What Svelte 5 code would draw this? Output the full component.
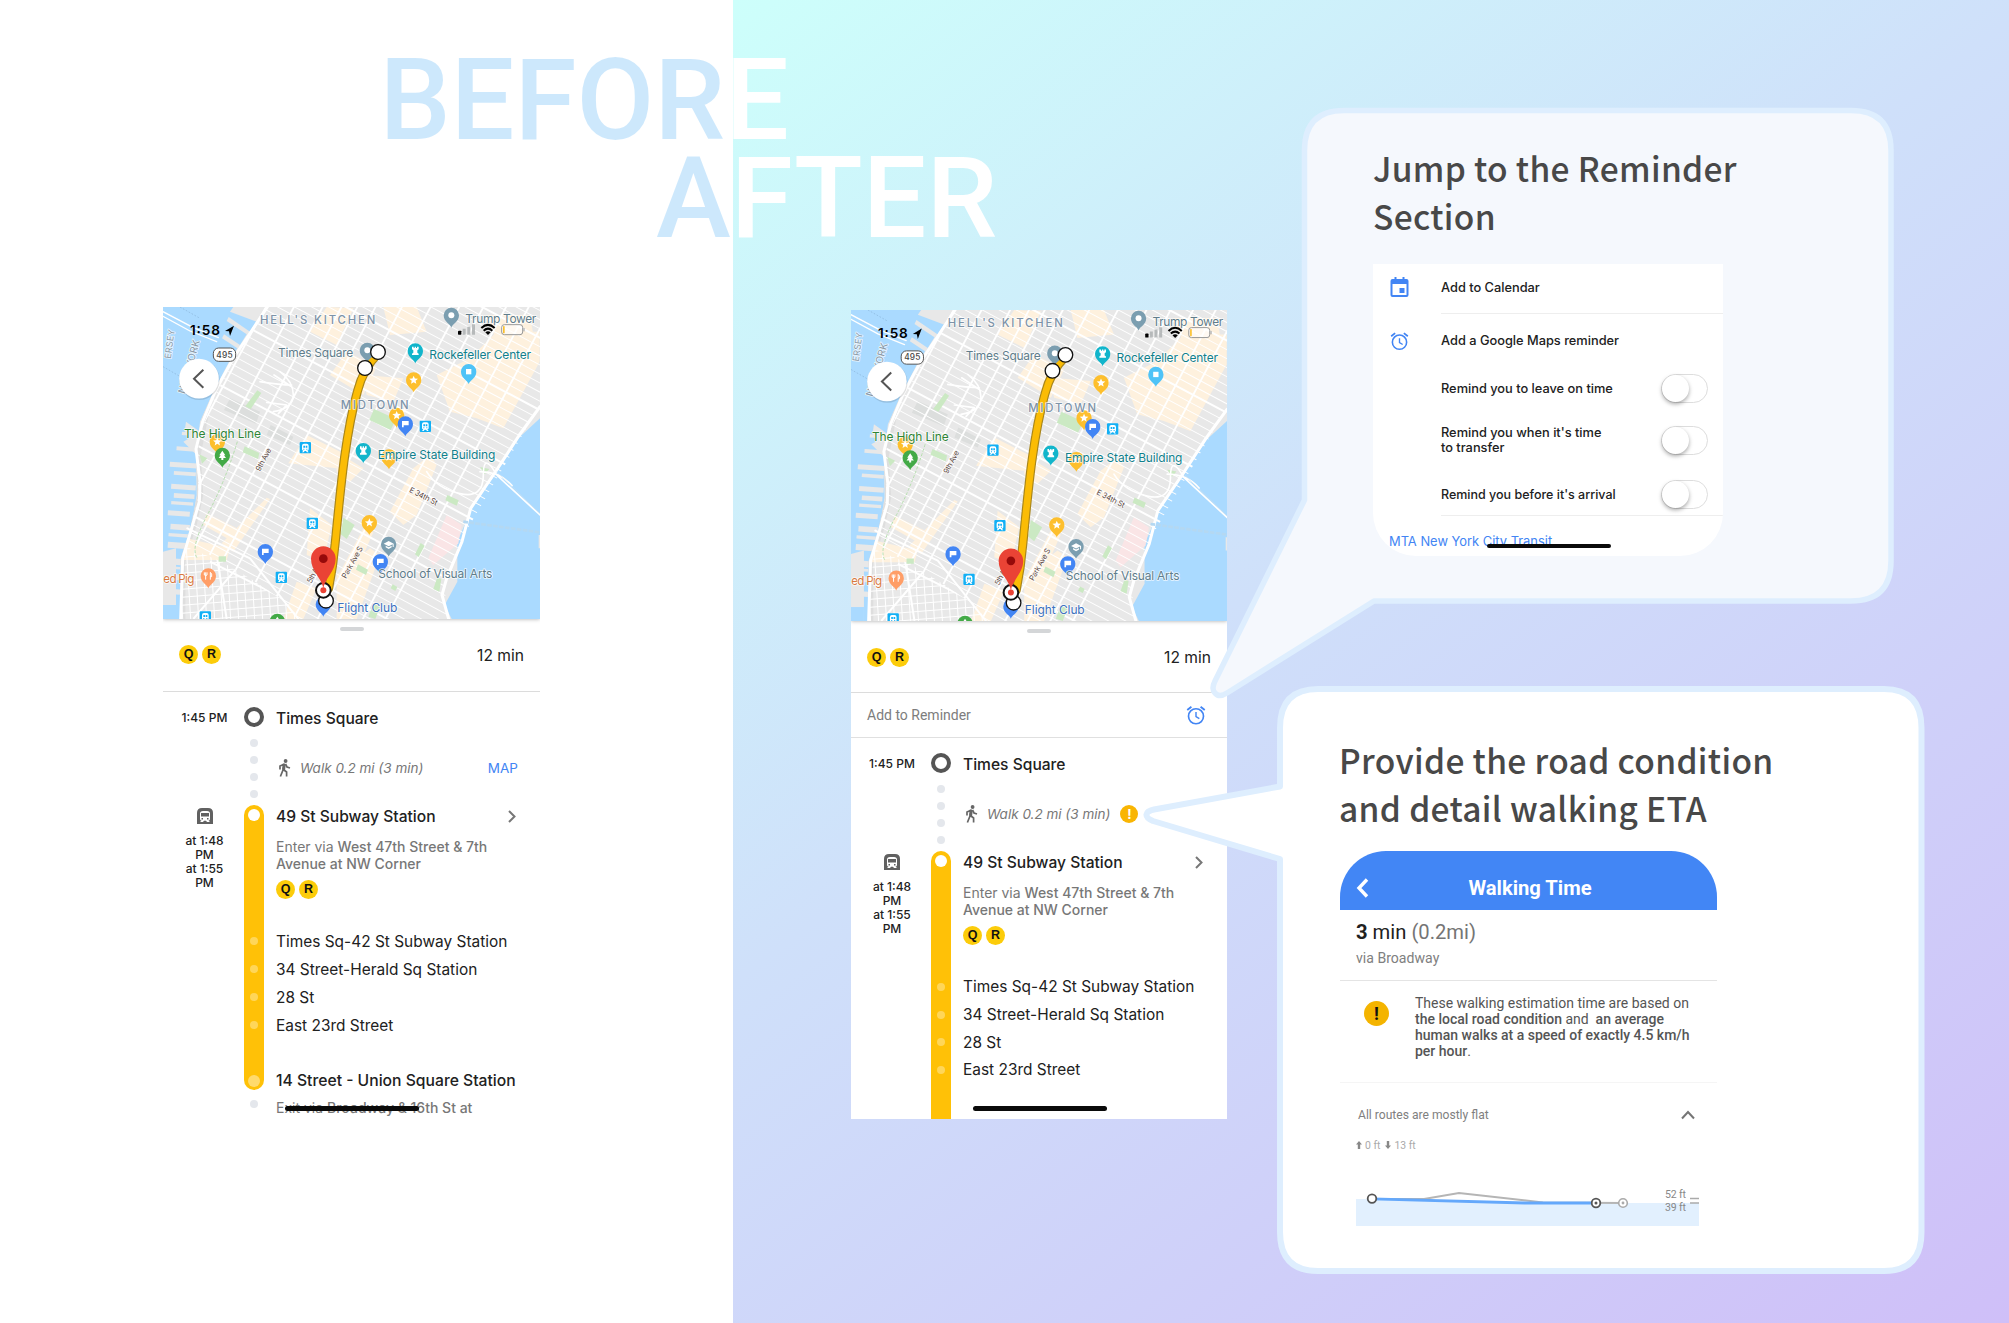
<script>
  const range = (from, to, step) => {
    const out = [];
    for (let v = from; v <= to; v += step) out.push(v);
    return out;
  };
  const streets = range(-700, 900, 24);
  const avenues = [20, 92, 168, 246, 322, 398, 474, 524, 566, 614, 684, 760, 836, 900, 960, 1020, 1080];
  const villageLines = range(60, 420, 24);

  const piers = [
    [60, 500, 82, 15], [72, 528, 66, 11], [64, 566, 74, 15], [72, 594, 62, 14], [54, 646, 66, 15],
    [62, 686, 58, 17], [54, 740, 54, 18], [39, 788, 56, 19], [39, 835, 52, 17], [39, 880, 52, 16],
    [80, 454, 56, 12], [96, 410, 44, 10], [64, 618, 66, 10], [56, 714, 58, 10], [39, 812, 52, 8]
  ];

  const commercial = [
    '480,110 560,150 610,40 530,36', '540,240 640,300 680,215 590,170', '700,36 800,36 830,110 720,120',
    '470,420 590,480 560,520 415,505', '560,470 640,520 600,560 560,530', '640,240 760,250 730,320 650,300',
    '860,240 960,190 1040,110 1169,110 1169,200 1060,400 980,370 900,350', '1010,60 1140,60 1150,120 1040,140',
    '790,520 840,480 860,510 800,660 760,690 720,650', '350,608 360,612 250,770 215,745',
    '170,655 260,700 240,735 160,690', '480,640 545,690 520,800 470,780', '110,730 240,760 230,795 100,795',
    '560,840 660,760 690,780 620,972 560,972', '640,700 670,712 600,870 560,850', '440,860 500,880 460,972 400,972'
  ];

  const parks = [
    '672,342 738,372 722,405 658,375', '322,286 334,294 302,342 286,334', '284,454 328,474 324,492 278,472',
    '580,668 614,690 590,732 572,718', '148,478 172,490 156,506', '892,600 926,616 920,632 886,616',
    '990,516 1018,522 1004,538', '812,744 824,752 806,786 795,778', '206,784 228,784 228,800 206,800',
    '624,808 654,824 648,840 618,824', '862,846 874,852 868,890 850,882', '728,868 742,876 736,888 722,880',
    '670,925 690,935 676,972 655,965'
  ];

  const pins = [
    { x: 904, y: 61, color: '#7b9eb0', glyph: 'dot' },
    { x: 652, y: 166, color: '#7b9eb0', glyph: 'dot' },
    { x: 796, y: 168, color: '#12b5cb', glyph: 'rook' },
    { x: 956, y: 230, color: '#4fc3f7', glyph: 'square' },
    { x: 791, y: 255, color: '#fdbf2d', glyph: 'star' },
    { x: 740, y: 361, color: '#fdbf2d', glyph: 'star' },
    { x: 766, y: 387, color: '#4285f4', glyph: 'flag' },
    { x: 202, y: 440, color: '#fdbf2d', glyph: 'star' },
    { x: 217, y: 481, color: '#43aa47', glyph: 'tree' },
    { x: 640, y: 467, color: '#12b5cb', glyph: 'rook' },
    { x: 717, y: 486, color: '#fdbf2d', glyph: 'star' },
    { x: 658, y: 683, color: '#fdbf2d', glyph: 'star' },
    { x: 716, y: 748, color: '#7b9eb0', glyph: 'cap' },
    { x: 691, y: 800, color: '#4285f4', glyph: 'flag' },
    { x: 346, y: 770, color: '#4285f4', glyph: 'flag' },
    { x: 175, y: 843, color: '#ff9e67', glyph: 'fork' },
    { x: 520, y: 928, color: '#4285f4', glyph: 'none' },
    { x: 382, y: 979, color: '#43aa47', glyph: 'tree' }
  ];
  const stations = [[466, 458], [826, 394], [487, 685], [394, 847], [166, 966]];

  const labels = [
    { x: 330, y: 86, w: 346, t: "HELL'S KITCHEN", c: '#7d93a8', s: 34, b: 500 },
    { x: 572, y: 343, w: 204, t: 'MIDTOWN', c: '#7d93a8', s: 34, b: 500 },
    { x: 946, y: 84, w: 213, t: 'Trump Tower', c: '#607d8b', s: 36, b: 400 },
    { x: 384, y: 187, w: 226, t: 'Times Square', c: '#607d8b', s: 36, b: 400 },
    { x: 838, y: 192, w: 305, t: 'Rockefeller Center', c: '#11808c', s: 36, b: 400 },
    { x: 102, y: 430, w: 231, t: 'The High Line', c: '#2e8436', s: 36, b: 400 },
    { x: 683, y: 492, w: 353, t: 'Empire State Building', c: '#11808c', s: 36, b: 400 },
    { x: 685, y: 848, w: 342, t: 'School of Visual Arts', c: '#607d8b', s: 36, b: 400 },
    { x: 562, y: 951, w: 180, t: 'Flight Club', c: '#3c71c0', s: 36, b: 400 },
    { x: 40, y: 865, w: 93, t: 'ed Pig', c: '#d9793f', s: 35, b: 400 }
  ];
  const roadLabels = [
    { x: 330, y: 530, r: -62, w: 74, t: '9th Ave' },
    { x: 776, y: 590, r: 27, w: 92, t: 'E 34th St' },
    { x: 588, y: 852, r: -61, w: 106, t: 'Park Ave S' },
    { x: 484, y: 866, r: -62, w: 48, t: '5th A' }
  ];

  const stops = ['Times Sq-42 St Subway Station', '34 Street-Herald Sq Station', '28 St', 'East 23rd Street'];
</script>

{#snippet pin(p)}
  <g transform="translate({p.x} {p.y})">
    <path d="M0 37C-3 25-23 20-23 0a23 23 0 0 1 46 0C23 20 3 25 0 37Z" fill={p.color} />
    {#if p.glyph === 'dot'}
      <circle r="9" fill="#fff" />
    {:else if p.glyph === 'square'}
      <rect x="-8" y="-8" width="16" height="16" fill="#fff" />
    {:else if p.glyph === 'star'}
      <polygon points="0,-13 3.6,-4.4 13,-3.8 5.8,2.2 8,11.4 0,6.400 -8,11.4 -5.8,2.2 -13,-3.8 -3.6,-4.4" fill="#fff" />
    {:else if p.glyph === 'flag'}
      <path d="M-10-9H10V4H-5V10H-10Z" fill="#fff" />
    {:else if p.glyph === 'tree'}
      <path d="M0-14 9 0 5 0 11 8H3V14H-3V8H-11L-5 0-9 0Z" fill="#fff" />
    {:else if p.glyph === 'rook'}
      <path d="M-10-13h5v4h3v-4h4v4h3v-4h5v8l-4 3v7l4 3v4h-20v-4l4-3v-7l-4-3Z" fill="#fff" />
    {:else if p.glyph === 'cap'}
      <path d="M-15-2 0-10 15-2V8H12V0L0 6ZM-9 4 0 9 9 4V9L0 14-9 9Z" fill="#fff" />
    {:else if p.glyph === 'fork'}
      <path d="M-8-11v22M-12-11v8q4 4 8 0v-8M6 11V-11q6 4 4 13H6" fill="none" stroke="#fff" stroke-width="3" />
    {/if}
  </g>
{/snippet}

{#snippet map(id)}
  <svg class="map" viewBox="39 36 1131 936" preserveAspectRatio="none">
    <defs>
      <clipPath id="{id}-island">
        <path d="M345 36 300 110 240 195 190 290 150 380 138 480 146 600 124 700 96 780 90 972H890L884 860 930 740 965 640 1040 530 1110 425 1170 330V36Z" />
      </clipPath>
      <clipPath id="{id}-village"><path d="M108 755 215 800 300 850 420 930 445 972H92Z" /></clipPath>
      <clipPath id="{id}-grid"><path d="M345 36 200 290 160 390 140 480 146 600 112 740 215 800 300 850 420 930 445 972H890L884 860 930 740 1170 330V36Z" /></clipPath>
    </defs>
    <rect x="39" y="36" width="1131" height="936" fill="#aadaff" />
    <g fill="#e8e8e8">
      <path d="M252 36 345 36 300 110 236 66 230 78 290 118 270 150 222 118 216 130 262 160 240 195 190 290 150 380 138 480 140 600 124 700 96 780 90 972H905L884 930 922 860V740L965 640 1040 530 1110 425 1170 370V36Z" />
      <path d="M352 36H250L240 50 330 84ZM108 380 150 410 140 480 100 440 118 430 104 408Z" />
      {#each piers as [x, y, w, h]}
        <rect {x} {y} width={w} height={h} transform="rotate(4 {x} {y})" />
      {/each}
      <path d="M39 770 78 760V972H39ZM1166 720H1170V760H1166Z" />
    </g>
    <path d="M39 930H78V972H39Z" fill="#aadaff" />
    <path d="M190 290 155 370 138 480 142 600 118 710 92 790 90 972H106V800L140 690 160 600 152 480 170 390Z" fill="#dedede" />
    <g clip-path="url(#{id}-island)">
      {#each commercial as points}<polygon {points} fill="#fef1de" />{/each}
      <path d="M890 660 935 690 925 745 850 810 835 790Z" fill="#fae5e6" />
      <path d="M240 310 330 350 318 386 222 345ZM362 390 430 425 420 450 350 420Z" fill="#dcdedd" />
    </g>
    <g clip-path="url(#{id}-grid)">
      <g transform="rotate(28)" stroke="#fff" fill="none">
        {#each streets as y, i}<path d="M0 {y}H1400" stroke-width={i % 8 === 3 ? 6 : 2.8} />{/each}
        {#each avenues as x}<path d="M{x} -700V900" stroke-width="5.500" />{/each}
      </g>
    </g>
    <g clip-path="url(#{id}-village)" stroke="#fff" stroke-width="3">
      {#each villageLines as x}
        <path d="M{x} 740 {x + 14} 972" />
        <path d="M80 {x + 560} 460 {x + 530}" />
      {/each}
      <path d="M180 800 460 940M130 972 260 820M230 972 200 780" stroke-width="6" />
    </g>
    <g clip-path="url(#{id}-island)">
      {#each parks as points}<polygon {points} fill="#cbe9c3" />{/each}
    </g>
    <g fill="none" stroke="#fff" stroke-linecap="round" stroke-linejoin="round">
      <path d="M352 36 300 115 252 186 196 288 158 380 138 462 150 560 148 620 122 710 98 790 92 972" stroke-width="9" />
      <path d="M1170 335 1108 420 1040 525 962 640 936 740 890 850 876 900 896 972" stroke-width="9" />
      <path d="M39 50 130 98 205 128M39 64 120 108 200 140" stroke-width="4" />
      <path d="M390 230Q430 260 430 300T370 350M372 240 425 275M350 322 410 330 385 356M330 260Q390 270 425 270" stroke-width="5" />
      <path d="M830 530Q860 580 930 596T1000 540 1040 540L1170 660M990 530Q1050 530 1086 572" stroke-width="5" />
      <path d="M112 700 300 790 445 972" stroke-width="6" />
    </g>
    <path d="M1040 530 1170 656" stroke="#d7e0e6" fill="none" stroke-width="1.500" />
    <path d="M940 680 1170 712" stroke="#b4d8f2" stroke-width="8" stroke-dasharray="14 4" fill="none" />
    <path d="M262 440Q225 560 172 660T142 790" stroke="#b6dfae" stroke-width="3" stroke-dasharray="9 5" fill="none" />
    <path d="M90 36 150 70M39 215 100 250 185 300" stroke="#8ab4d8" stroke-width="2" stroke-dasharray="5 5" fill="none" />

    <g fill="none" stroke-linecap="round">
      <path d="M684 176Q640 220 622 290C585 420 570 600 556 740Q550 810 536 880" stroke="#a9861b" stroke-width="27" />
      <path d="M684 176Q640 220 622 290C585 420 570 600 556 740Q550 810 536 880" stroke="#fbbc05" stroke-width="20" />
    </g>

    {#each stations as [x, y]}
      <g transform="translate({x} {y})">
        <rect x="-17" y="-17" width="34" height="34" rx="3" fill="#12b0f5" />
        <path d="M-10-6q0-6 6-6H4q6 0 6 6V5q0 4-4 4l4 5H5L2 10H-2l-3 4h-5l4-5q-4 0-4-4Z" fill="#fff" />
        <path d="M-6-6H-1V0H-6ZM1-6H6V0H1ZM-6 3h3v3h-3ZM3 3h3v3H3Z" fill="#12b0f5" />
      </g>
    {/each}
    {#each pins as p}{@render pin(p)}{/each}

    <g class="map-text">
      {#each labels as l}
        <text x={l.x} y={l.y} textLength={l.w} fill={l.c} font-size={l.s} font-weight={l.b}>{l.t}</text>
      {/each}
      {#each roadLabels as l}
        <text x={l.x} y={l.y} textLength={l.w} transform="rotate({l.r} {l.x} {l.y})" fill="#5d4a44" font-size="23">{l.t}</text>
      {/each}
      <text x="104" y="298" transform="rotate(-74 104 298)" textLength="166" fill="#8a9aa8" font-size="30">NEW YORK</text>
      <text x="62" y="192" transform="rotate(-82 62 192)" textLength="88" fill="#8a9aa8" font-size="27">ERSEY</text>
    </g>

    <g fill="#fff" stroke="#111" stroke-width="4">
      <circle cx="684" cy="171" r="22" />
      <circle cx="645" cy="219" r="22" />
      <circle cx="528" cy="917" r="22" />
      <circle cx="520" cy="886" r="22" stroke-width="6" />
    </g>
    <circle cx="520" cy="886" r="9" fill="#ea4335" />
    <path d="M520 880C516 850 483 828 483 791a37 37 0 0 1 74 0C557 828 524 850 520 880Z" fill="#ea4335" />
    <circle cx="520" cy="791" r="13" fill="#960a0a" />

    <rect x="190" y="159" width="67" height="40" rx="16" fill="#fff" stroke="#555" stroke-width="3" />
    <text x="199" y="188" textLength="49" class="shield">495</text>
    <circle cx="148" cy="254" r="61" fill="#000" opacity=".12" />
    <circle cx="147" cy="251" r="59.500" fill="#fff" />
    <path d="M160 224 132 251 160 278" fill="none" stroke="#555" stroke-width="6" />

    <text x="120" y="119" textLength="90" class="clock">1:58</text>
    <path d="M225 108 252 92 240 123 237 109Z" fill="#000" />
    <rect x="924" y="107" width="10" height="12" rx="2" fill="#000" />
    <path d="M938 101h9v18h-9ZM952 95h9v24h-9ZM966 88h9v31h-9Z" fill="#a9adae" opacity=".8" />
    <g fill="none" stroke="#000" stroke-width="6">
      <path d="M994 99Q1014 80 1034 99M1001 107Q1014 95 1027 107" />
      <path d="M1006 112Q1014 106 1022 112L1014 120Z" fill="#000" stroke="none" />
    </g>
    <rect x="1055" y="89" width="63" height="30" rx="8" fill="#fff" fill-opacity=".6" stroke="#999" stroke-width="3" />
    <rect x="1059" y="93" width="5" height="22" rx="2" fill="#fbc02d" />
    <path d="M1122 99v10" stroke="#999" stroke-width="3" />
  </svg>
{/snippet}

{#snippet badges()}
  <div class="badges"><span>Q</span><span>R</span></div>
{/snippet}

{#snippet alarm(cls)}
  <svg class={cls} viewBox="0 0 24 24" fill="none" stroke="#4285f4" stroke-width="2">
    <circle cx="12" cy="13.500" r="9" />
    <path d="M12 8.500V14l4 2.400" stroke-width="1.700" />
    <path d="M1.500 6 6.500 2M22.500 6 17.500 2" stroke-width="2.200" />
  </svg>
{/snippet}

{#snippet phone(id, after)}
  <section class="phone" class:after>
    {@render map(id)}
    <header class="summary">
      <i class="handle"></i>
      {@render badges()}
      <span class="total">12 min</span>
    </header>
    {#if after}
      <div class="reminder"><span>Add to Reminder</span>{@render alarm('alarm')}</div>
    {/if}
    <div class="timeline">
      <div class="row start">
        <span class="time">1:45 PM</span>
        <span class="rail"><i class="ring"></i></span>
        <strong class="main">Times Square</strong>
      </div>
      <div class="row walk">
        <span></span>
        <span class="rail dots"><i></i><i></i><i></i><i></i></span>
        <div class="main">
          <svg class="walker" viewBox="0 0 13 18" fill="none" stroke="#666" stroke-width="1.700">
            <circle cx="7.600" cy="2" r="1.900" fill="#666" stroke="none" />
            <path d="M6.300 4.500 5 11 2.400 17.500M6 11 8.600 13V17.500M6.500 5 2 7V10.500M7.500 5 9 8 12 9" />
            <path d="M6.200 5 5.600 11" stroke-width="3" />
          </svg>
          <em>Walk 0.2 mi (3 min)</em>
          {#if after}<b class="warn">!</b>{:else}<a class="maplink" href="#map">MAP</a>{/if}
        </div>
      </div>
      <div class="row board">
        <span class="time">
          <svg class="train" viewBox="0 0 16 16">
            <path d="M0 16V5Q0 0 5 0H11Q16 0 16 5V16Z" fill="#616161" />
            <path d="M3 5.500Q3 3 6 3H10Q13 3 13 5.500V11Q13 12.500 11.500 12.500L13 14H3L4.500 12.500Q3 12.500 3 11Z" fill="#fff" />
            <path d="M4 5H12V8.500H4ZM4.500 10H6V11.500H4.500ZM10 10H11.500V11.500H10ZM6 14 7 12.700H9L10 14Z" fill="#616161" />
          </svg>
        </span>
        <span class="rail line top"><i class="hole"></i></span>
        <div class="main">
          <strong>49 St Subway Station</strong>
          <svg class="chev" viewBox="0 0 8 13" fill="none" stroke="#777" stroke-width="2"><path d="M1 1 6.500 6.500 1 12" /></svg>
        </div>
      </div>
      <div class="row detail">
        <span class="time">at 1:48<br />PM<br />at 1:55<br />PM</span>
        <span class="rail line"></span>
        <div class="main">
          <p>Enter via <b>West 47th Street &amp; 7th<br />Avenue at NW Corner</b></p>
          {@render badges()}
        </div>
      </div>
      {#each stops as stop}
        <div class="row stop">
          <span></span>
          <span class="rail line"><i></i></span>
          <span class="main">{stop}</span>
        </div>
      {/each}
      {#if after}
        <div class="row rest"><span></span><span class="rail line"></span><span></span></div>
      {:else}
        <div class="row gap"><span></span><span class="rail line"></span><span></span></div>
        <div class="row end">
          <span></span>
          <span class="rail line bottom"><i></i></span>
          <strong class="main">14 Street - Union Square Station</strong>
        </div>
        <div class="row exit">
          <span></span>
          <span class="rail"><i></i></span>
          <span class="main">Exit via <b>Broadway &amp; 16th St at</b></span>
        </div>
      {/if}
    </div>
    <i class="home"></i>
  </section>
{/snippet}

<main class="page">
  <div class="left">
    <h1><span>BEFORE</span><span class="second">AFTER</span></h1>
    <div class="phones">
      {@render phone('before', false)}
      {@render phone('after', true)}
    </div>
  </div>

  <div class="callouts">
    <article class="callout first">
      <svg class="bubble" viewBox="1200 100 710 610">
        <path d="M1344 110.500H1851Q1891 110.500 1891 150.500V561Q1891 601 1851 601H1374L1227 693Q1219 698 1215 693 1211 689 1215 681L1304.500 500V150.500Q1304.500 110.500 1344 110.500Z" fill="#f5f8fd" stroke="#deeefe" stroke-width="5.500" stroke-linejoin="round" />
      </svg>
      <h2>Jump to the Reminder<br />Section</h2>
      <div class="card reminders">
        <div class="item cal">
          <svg class="icon" viewBox="0 0 18 20">
            <path d="M4 0H6V2H12V0H14V2H16Q18 2 18 4V18Q18 20 16 20H2Q0 20 0 18V4Q0 2 2 2H4ZM2 7V18H16V7ZM9 11H14V16H9Z" fill="#4285f4" fill-rule="evenodd" />
          </svg>
          <span>Add to Calendar</span>
        </div>
        <div class="item gm">{@render alarm('icon')}<span>Add a Google Maps reminder</span></div>
        <div class="item r1"><i></i><span>Remind you to leave on time</span><b class="toggle"></b></div>
        <div class="item r2"><i></i><span>Remind you when it's time<br />to transfer</span><b class="toggle"></b></div>
        <div class="item r3"><i></i><span>Remind you before it's arrival</span><b class="toggle"></b></div>
        <div class="agency"><span>MTA New York City Transit</span></div>
        <i class="home"></i>
      </div>
    </article>

    <article class="callout second">
      <svg class="bubble" viewBox="1130 680 800 600">
        <path d="M1318 689H1884Q1921.500 689 1921.500 728V1232Q1921.500 1271 1884 1271H1318Q1280 1271 1280 1232V859L1153 821Q1146 818 1146.500 814.500 1147 811 1154 809.500L1280 786.500V728Q1280 689 1318 689Z" fill="#fff" stroke="#deeefe" stroke-width="6" stroke-linejoin="round" />
      </svg>
      <h2>Provide the road condition<br />and detail walking ETA</h2>
      <div class="card walking">
        <header>
          <svg viewBox="0 0 13 20" fill="none" stroke="#fff" stroke-width="3.400"><path d="M11 1.500 3 10 11 18.500" /></svg>
          <span>Walking Time</span>
        </header>
        <div class="eta">
          <p><b>3</b> min <span>(0.2mi)</span></p>
          <small>via Broadway</small>
        </div>
        <div class="note">
          <b class="alert">!</b>
          <p>These walking estimation time are based on<br /><b>the local road condition</b> and &nbsp;<b>an average<br />human walks at a speed of exactly 4.5 km/h<br />per hour</b>.</p>
        </div>
        <div class="flat">
          <span>All routes are mostly flat</span>
          <svg viewBox="0 0 14 10" fill="none" stroke="#757575" stroke-width="2"><path d="M1 8.500 7 2 13 8.500" /></svg>
        </div>
        <div class="climb">
          <svg viewBox="0 0 6 8"><path d="M3 0 6 3.500H4.200V8H1.800V3.500H0Z" fill="#888" /></svg><span>0 ft</span>
          <svg viewBox="0 0 6 8"><path d="M3 8 6 4.500H4.200V0H1.800V4.500H0Z" fill="#888" /></svg><span>13 ft</span>
        </div>
        <svg class="chart" viewBox="1356 1186 343 40">
          <path d="M1356 1199H1372L1520 1203H1699V1226H1356Z" fill="#e2f0fe" />
          <path d="M1372 1199 1424 1199 1459 1193 1543 1202.500 1623 1203" fill="none" stroke="#b5b5b5" stroke-width="2" />
          <path d="M1372 1198.800 1525 1203H1596" fill="none" stroke="#64a8fb" stroke-width="2.800" />
          <circle cx="1372" cy="1198.600" r="4.300" fill="#fff" stroke="#555" stroke-width="1.800" />
          <circle cx="1596" cy="1203" r="4.300" fill="#fff" stroke="#555" stroke-width="1.800" />
          <circle cx="1596" cy="1203" r="1.500" fill="#555" />
          <circle cx="1623" cy="1203" r="4.300" fill="#fff" stroke="#aaa" stroke-width="1.600" />
          <circle cx="1623" cy="1203" r="1.400" fill="#aaa" />
          <path d="M1690 1198.500H1699M1690 1203H1699" stroke="#aaa" stroke-width="1.300" />
          <text x="1665" y="1198" textLength="21">52 ft</text>
          <text x="1665" y="1210.500" textLength="21">39 ft</text>
        </svg>
      </div>
    </article>
  </div>
</main>

<style>
  :global(body) { margin: 0; }
  .page {
    width: 2009px;
    height: 1323px;
    overflow: hidden;
    display: grid;
    grid-template-columns: 1277px 1fr;
    font-family: Inter, 'Liberation Sans', sans-serif;
    color: #212121;
    background: linear-gradient(143deg, #cdfffb 0%, #cfe0fa 43%, #cfbff8 100%) 733px 0 / 1276px 1323px no-repeat #fff;
  }
  i, em { font-style: normal; }
  p { margin: 0; }
  h1 {
    margin: 0;
    padding: 52px 0 0 379.500px;
    height: 196px;
    font: 500 112.800px/98px Roboto, sans-serif;
    background: linear-gradient(90deg, #cde8fc 733px, #fff 733px);
    background-clip: text;
    -webkit-background-clip: text;
    color: transparent;
  }
  h1 span { display: block; }
  h1 .second { padding-left: 276.500px; }

  .phones { display: flex; align-items: flex-start; gap: 311px; padding: 59px 0 0 163px; }
  .phone { position: relative; width: 377px; height: 812px; background: #fff; overflow: hidden; display: flex; flex-direction: column; }
  .phone.after { width: 376px; height: 809px; margin-top: 3px; }
  .map { display: block; width: 100%; height: 312px; flex: none; box-shadow: 0 0 4px rgba(0, 0, 0, .35); }
  .after .map { height: 311px; }
  .map-text { font-family: Inter, sans-serif; stroke: #fff; stroke-opacity: .75; stroke-width: 5px; paint-order: stroke; stroke-linejoin: round; }
  .shield { font: 500 25px Inter, sans-serif; fill: #444; }
  .clock { font: 600 41px Inter, sans-serif; }

  .summary {
    position: relative;
    height: 73px;
    flex: none;
    box-sizing: border-box;
    padding: 0 16px 1px 16px;
    border-bottom: 1px solid #dcdcdc;
    display: flex;
    justify-content: space-between;
    align-items: center;
  }
  .after .summary { height: 72px; padding: 1px 16px 0 16px; }
  .handle { position: absolute; left: 50%; top: 8px; width: 24px; height: 4px; margin-left: -12px; border-radius: 2px; background: #d4d6d8; }
  .total { font-size: 15.600px; padding-top: 1px; }
  .badges { display: flex; gap: 4px; }
  .badges span {
    width: 19px; height: 19px; border-radius: 50%; background: #fccc0a; color: #111;
    font: 700 12.500px/19px 'Liberation Sans', sans-serif; text-align: center;
  }
  .reminder {
    height: 45px; box-sizing: border-box; flex: none; padding: 0 21px 0 16px; border-bottom: 1px solid #e0e0e0;
    display: flex; justify-content: space-between; align-items: center;
    font: 400 14px Roboto, sans-serif; color: #7d7d7d;
  }
  .alarm { width: 20px; height: 20px; }

  .timeline { padding-top: 8px; }
  .row { display: grid; grid-template-columns: 81px 20px 1fr; }
  .after .row { grid-template-columns: 80px 20px 1fr; }
  .row .main { padding-left: 12px; align-self: center; white-space: nowrap; }
  .row strong, strong.main { font-weight: 500; font-size: 15.600px; }
  .row.start strong.main { padding-top: 2px; }
  .time { font-size: 12px; font-weight: 500; text-align: center; align-self: center; padding-left: 2px; }
  .rail { display: flex; flex-direction: column; align-items: center; justify-content: center; }
  .rail.line { background: #ffc107; }
  .rail.top { border-radius: 10px 10px 0 0; }
  .rail.bottom { border-radius: 0 0 10px 10px; }
  .start { height: 34px; }
  .ring { width: 12px; height: 12px; border: 4px solid #555; border-radius: 50%; }
  .walk { height: 68px; margin-bottom: 3px; }
  .rail.dots { justify-content: space-around; }
  .dots i, .exit i { width: 8px; height: 8px; border-radius: 50%; background: #e4e7ec; }
  .walk .main { display: flex; align-items: center; }
  .walker { width: 13px; height: 18px; margin: 0 9px 0 2px; }
  .walk em { font-style: italic; font-size: 13.500px; color: #777; }
  .maplink { margin-left: auto; margin-right: 22px; color: #4285f4; font-size: 13.500px; text-decoration: none; }
  .warn { width: 18px; height: 18px; margin-left: 10px; border-radius: 50%; background: #f9b503; color: #fff; font: 700 13px/18px Inter, sans-serif; text-align: center; }
  .board { height: 22px; }
  .board .time { display: flex; justify-content: center; }
  .train { width: 16px; height: 16px; }
  .hole { width: 12px; height: 12px; border-radius: 50%; background: #fff; margin-top: -2px; }
  .board .main { display: flex; align-items: center; justify-content: space-between; }
  .chev { width: 8px; height: 13px; margin-right: 24px; }
  .detail { height: 100px; }
  .detail .time { align-self: start; padding-top: 6.500px; line-height: 14.200px; }
  .detail .main { align-self: start; padding-top: 12px; }
  .detail p { font-size: 14px; line-height: 16.600px; color: #777; margin-bottom: 8px; }
  .detail p b, .exit b { font-weight: 500; }
  .stop { height: 28px; }
  .after .stop { height: 27.700px; }
  .stop .main { font-size: 15.450px; }
  .stop i { width: 8px; height: 8px; border-radius: 50%; background: #ffd659; }
  .gap { height: 32px; }
  .end { height: 18px; }
  .end strong.main { font-size: 15.700px; }
  .end i { width: 12px; height: 12px; border-radius: 50%; background: #ffda6c; }
  .exit { height: 30px; color: #777; font-size: 14px; }
  .exit .main { padding-top: 6px; }
  .rest { height: 60px; }
  .home { position: absolute; left: 122px; top: 799px; width: 134px; height: 5px; border-radius: 3px; background: #0a0a0a; }
  .after .home { top: 796px; }

  .callout { position: relative; }
  .callout h2, .callout .card { position: relative; }
  .bubble { position: absolute; overflow: visible; }
  .first { height: 686px; }
  .first .bubble { left: -77px; top: 100px; width: 710px; height: 610px; }
  .second .bubble { left: -147px; top: -6px; width: 800px; height: 600px; }
  h2 { margin: 0; font: 500 33.500px/48px 'Noto Sans CJK SC', sans-serif; color: #484848; letter-spacing: .330px; white-space: nowrap; }
  .first h2 { padding: 144px 0 0 96px; }
  .second h2 { padding: 50px 0 0 62px; }

  .reminders { width: 350px; height: 292px; margin: 24px 0 0 96px; background: #fff; border-radius: 0 0 43px 43px; overflow: hidden; font-size: 12.800px; line-height: 15px; font-weight: 500; }
  .item { display: grid; grid-template-columns: 51px 1fr auto; align-items: center; padding: 0 15px 0 17px; white-space: nowrap; box-sizing: border-box; }
  .icon { width: 19px; height: 20px; }
  .cal, .r3 { background: linear-gradient(#eee, #eee) 68px 100% / 100% 1px no-repeat; }
  .cal { height: 50px; padding-bottom: 4px; }
  .gm { height: 53px; }
  .r1 { height: 43px; }
  .r2 { height: 62px; padding-bottom: 2px; }
  .r3 { height: 44px; font-size: 12.500px; }
  .toggle { width: 45px; height: 27px; border: 1px solid #ddd; border-radius: 15px; position: relative; }
  .toggle::after { content: ''; position: absolute; left: 0; top: 0; width: 27px; height: 27px; border-radius: 50%; background: #fff; box-shadow: 0 2px 4px rgba(0, 0, 0, .35); }
  .agency { margin: 16px 0 0 16px; height: 15px; overflow: hidden; color: #4285f4; font-weight: 400; font-size: 12.900px; line-height: 20px; }
  .reminders .home { left: 114px; top: 280px; width: 124px; height: 4px; }

  .walking { width: 377px; margin: 19px 0 0 63px; font-family: Roboto, sans-serif; }
  .walking header { height: 59px; background: #4286f5; border-radius: 46px 46px 0 0; display: flex; align-items: center; padding: 14px 16px 0; box-sizing: border-box; color: #fff; font-weight: 700; font-size: 20.200px; }
  .walking header svg { width: 13px; height: 20px; }
  .walking header span { flex: 1; text-align: center; padding-right: 10px; }
  .eta { height: 71px; box-sizing: border-box; padding: 9px 0 0 16px; border-bottom: 1px solid #e4e4e4; }
  .eta p { font-size: 20.200px; line-height: 26px; }
  .eta span { color: #757575; }
  .eta small { display: block; font-size: 14.100px; line-height: 18px; color: #808080; margin-top: 4px; }
  .note { display: flex; height: 102px; box-sizing: border-box; border-bottom: 1px solid #f5f5f5; padding: 14px 0 0 24px; }
  .alert { width: 25px; height: 25px; margin: 6px 26px 0 0; border-radius: 50%; background: #f4b400; color: #111; font: 700 18px/25px Roboto, sans-serif; text-align: center; }
  .note p { font-size: 14px; line-height: 16px; color: #555; white-space: nowrap; }
  .note p b { font-weight: 500; }
  .flat { display: flex; justify-content: space-between; align-items: center; padding: 23px 22px 0 18px; height: 18px; font-size: 12.100px; color: #808080; }
  .flat svg { width: 14px; height: 10px; }
  .climb { display: flex; align-items: center; gap: 3px; padding-left: 16px; margin-top: 15px; height: 12px; font-size: 10.400px; color: #aaa; }
  .climb svg { width: 6px; height: 8px; }
  .climb span + svg { margin-left: 2px; }
  .chart { display: block; width: 343px; height: 40px; margin: 35px 0 0 16px; font-size: 10.500px; fill: #888; }
</style>
